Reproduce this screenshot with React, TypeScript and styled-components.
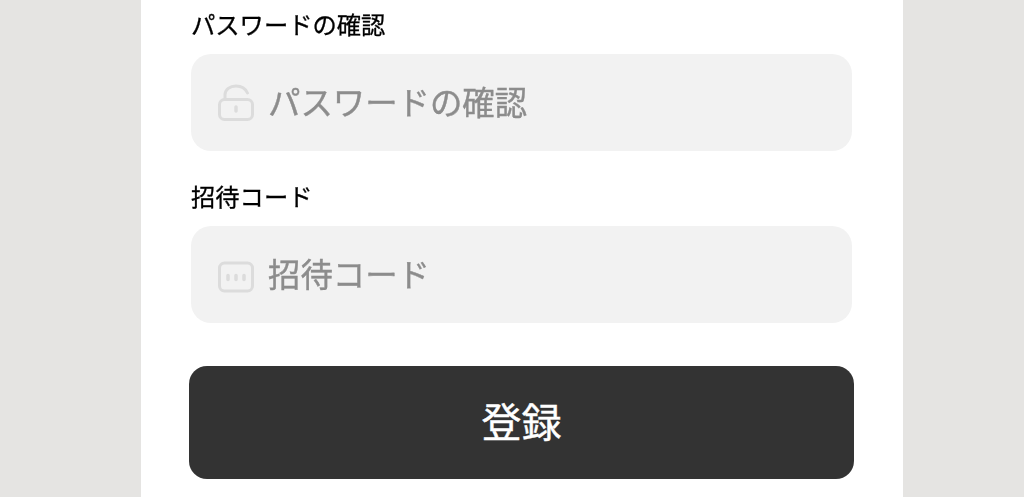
import React from "react";
import styled, { createGlobalStyle } from "styled-components";

const Global = createGlobalStyle`
  html, body { margin: 0; padding: 0; height: 100%; overflow: hidden; background: #e5e4e2; }
  body { font-family: "Noto Sans CJK JP", "Liberation Sans", sans-serif; }
`;

const Page = styled.div`
  width: 1024px;
  height: 497px;
  display: flex;
  justify-content: flex-start;
  padding-left: 141px;
  box-sizing: border-box;
  overflow: hidden;
  background: #e5e4e2;
`;

const Card = styled.main`
  width: 762px;
  height: 497px;
  box-sizing: border-box;
  padding: 6px 49px 0 50px;
  background: #ffffff;
  display: flex;
  flex-direction: column;
`;

const Field = styled.div`
  display: flex;
  flex-direction: column;
  margin-bottom: 27px;
`;

const Label = styled.label`
  height: 36px;
  margin-bottom: 12px;
  font-size: 24.3px;
  line-height: 36px;
  color: #000000;
  will-change: transform;
  -webkit-text-stroke: 0.3px #000000;
`;

const InputBox = styled.div`
  width: 661px;
  height: 97px;
  box-sizing: border-box;
  display: flex;
  align-items: center;
  gap: 13px;
  padding: 0 26px;
  border-radius: 20px;
  background: #f2f2f2;
`;

const Placeholder = styled.span`
  font-size: 32.4px;
  line-height: 48px;
  margin-top: -3px;
  color: #8c8c8c;
  will-change: transform;
  -webkit-text-stroke: 0.4px #8c8c8c;
`;

const Icon = styled.svg`
  width: 38px;
  height: 38px;
  flex: none;
  fill: none;
  stroke: #dcdcdc;
  stroke-width: 3;
  stroke-linecap: round;
  stroke-linejoin: round;
`;

const Submit = styled.button`
  width: 665px;
  height: 113px;
  margin: 16px 0 0 -2px;
  padding: 0 0 5px;
  border: none;
  border-radius: 18px;
  background: #333333;
  color: #ffffff;
  font-family: inherit;
  font-size: 40px;
  line-height: 60px;
  -webkit-text-stroke: 0.4px #ffffff;
`;

const Dots = styled.path`
  stroke-width: 3.5;
`;

const LockIcon = () => (
  <Icon viewBox="0 0 38 38">
    <rect x="2.5" y="15.5" width="33" height="20" rx="5" />
    <path d="M8 15.5 V11 C8 5.5 13 2 19 2 C24 2 28.5 4.5 30.5 9" />
    <Dots d="M19 23 V27" />
  </Icon>
);

const CodeIcon = () => (
  <Icon viewBox="0 0 38 38">
    <rect x="2.5" y="7" width="33" height="28" rx="5" />
    <Dots d="M11 19.5 V23.5 M19 19.5 V23.5 M27 19.5 V23.5" />
  </Icon>
);

export default function App() {
  return (
    <>
      <Global />
      <Page>
        <Card>
          <Field>
            <Label>パスワードの確認</Label>
            <InputBox>
              <LockIcon />
              <Placeholder>パスワードの確認</Placeholder>
            </InputBox>
          </Field>
          <Field>
            <Label>招待コード</Label>
            <InputBox>
              <CodeIcon />
              <Placeholder>招待コード</Placeholder>
            </InputBox>
          </Field>
          <Submit type="button">登録</Submit>
        </Card>
      </Page>
    </>
  );
}
